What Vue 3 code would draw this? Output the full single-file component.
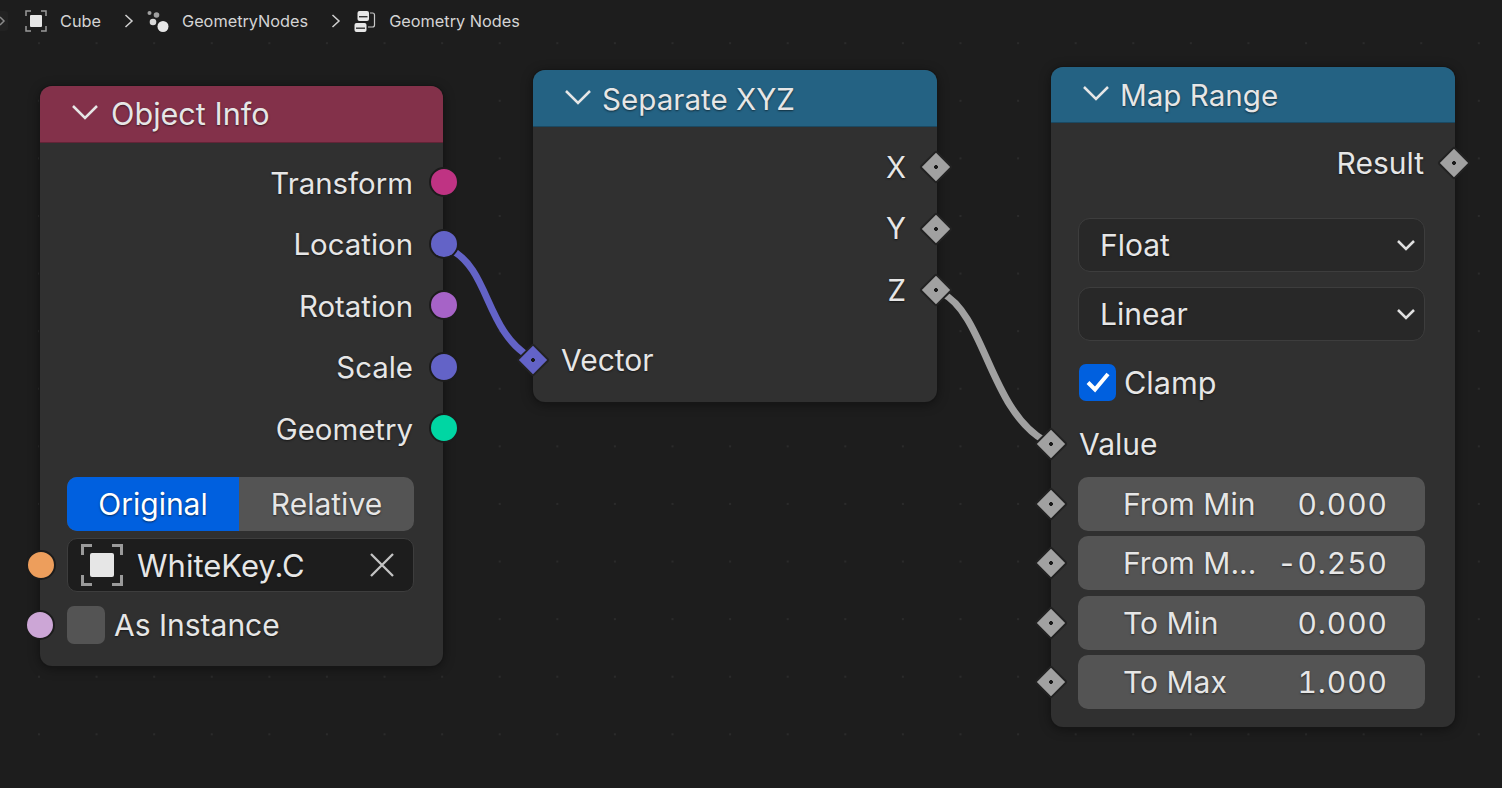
<script setup>
const objectOutputs = [
  { label: 'Transform', color: '#bf3383' },
  { label: 'Location', color: '#6363c7' },
  { label: 'Rotation', color: '#a663c7' },
  { label: 'Scale', color: '#6363c7' },
  { label: 'Geometry', color: '#00d6a3' },
]
const xyz = ['X', 'Y', 'Z']
const ranges = [
  { label: 'From Min', value: '0.000' },
  { label: 'From M...', value: '-0.250' },
  { label: 'To Min', value: '0.000' },
  { label: 'To Max', value: '1.000' },
]
</script>

<template>
  <main class="canvas">
    <nav class="crumbs">
      <span class="stub"><svg width="6" height="10" viewBox="0 0 6 10"><path d="M0 1l4 4-4 4" fill="none" stroke="#8a8a8a" stroke-width="1.5"/></svg></span>
      <svg class="crumb-icon first" width="22" height="22" viewBox="0 0 22 22">
        <path d="M1 6V1h5M16 1h5v5M21 16v5h-5M6 21H1v-5" fill="none" stroke="#9a9a9a" stroke-width="1.5"/>
        <rect x="5" y="5" width="12" height="12" rx="1" fill="#e6e6e6"/>
      </svg>
      <span class="crumb">Cube</span>
      <svg class="sep" width="10" height="14" viewBox="0 0 10 14"><path d="M1.5 1l6.500 6-6.500 6" fill="none" stroke="#d0d0d0" stroke-width="1.500"/></svg>
      <svg class="crumb-icon" width="22" height="22" viewBox="0 0 22 22">
        <circle cx="2.500" cy="3" r="2" fill="#a0a0a0"/>
        <circle cx="9.500" cy="5" r="2.800" fill="#a0a0a0"/>
        <circle cx="6" cy="12" r="3.300" fill="#d8d8d8"/>
        <circle cx="16" cy="16.500" r="5.500" fill="#e6e6e6"/>
      </svg>
      <span class="crumb">GeometryNodes</span>
      <svg class="sep" width="10" height="14" viewBox="0 0 10 14"><path d="M1.500 1l6.500 6-6.500 6" fill="none" stroke="#d0d0d0" stroke-width="1.500"/></svg>
      <svg class="crumb-icon" width="22" height="22" viewBox="0 0 22 22">
        <rect x="3.500" y="1" width="11.500" height="10" rx="2" fill="#e6e6e6"/>
        <rect x="5" y="6" width="8.500" height="1.400" fill="#333"/>
        <rect x="0.500" y="13" width="12" height="9" rx="2" fill="#e6e6e6"/>
        <rect x="2" y="17.500" width="9" height="1.400" fill="#333"/>
        <path d="M16 3h2.500q2 0 2 2v10q0 2-2 2H14" fill="none" stroke="#c8c8c8" stroke-width="1.200"/>
      </svg>
      <span class="crumb">Geometry Nodes</span>
    </nav>

    <section class="node object-info">
      <header class="head red">
        <svg class="fold" width="28" height="16" viewBox="0 0 28 16"><path d="M2 2l12 12L26 2" fill="none" stroke="currentColor" stroke-width="2.500"/></svg>
        <span>Object Info</span>
      </header>
      <div class="body">
        <div class="rows">
          <div v-for="o in objectOutputs" :key="o.label" class="row out">
            {{ o.label }}
            <i class="socket round right" :style="{ background: o.color }"></i>
          </div>
        </div>
        <div class="controls first-controls">
          <div class="segmented">
            <span class="seg on">Original</span>
            <span class="seg">Relative</span>
          </div>
          <div class="field slot">
            <i class="socket round left outer" style="background: #ed9e5c"></i>
            <svg width="42" height="42" viewBox="0 0 42 42">
              <path d="M1.500 11V1.500H11M31 1.500h9.500V11M40.500 31v9.500H31M11 40.500H1.500V31" fill="none" stroke="#9a9a9a" stroke-width="3"/>
              <rect x="9" y="9" width="24" height="24" rx="2" fill="#e6e6e6"/>
            </svg>
            <span class="slot-name">WhiteKey.C</span>
            <svg width="24" height="24" viewBox="0 0 24 24"><path d="M1 1l22 22M23 1L1 23" stroke="#c4c4c4" stroke-width="2.300"/></svg>
          </div>
          <label class="check">
            <i class="socket round left outer" style="background: #cca6d6"></i>
            <span class="box"></span>
            As Instance
          </label>
        </div>
      </div>
    </section>

    <section class="node separate">
      <header class="head blue">
        <svg class="fold" width="28" height="16" viewBox="0 0 28 16"><path d="M2 2l12 12L26 2" fill="none" stroke="currentColor" stroke-width="2.500"/></svg>
        <span>Separate XYZ</span>
      </header>
      <div class="body">
        <div class="rows">
          <div v-for="a in xyz" :key="a" class="row out">
            {{ a }}
            <i class="socket diamond right"></i>
          </div>
        </div>
        <div class="row in vector">
          <i class="socket diamond left purple"></i>
          Vector
        </div>
      </div>
    </section>

    <section class="node map-range">
      <header class="head blue">
        <svg class="fold" width="28" height="16" viewBox="0 0 28 16"><path d="M2 2l12 12L26 2" fill="none" stroke="currentColor" stroke-width="2.500"/></svg>
        <span>Map Range</span>
      </header>
      <div class="body">
        <div class="row out">
          Result
          <i class="socket diamond right"></i>
        </div>
        <div class="controls map-controls">
          <div class="select">Float
            <svg width="20" height="12" viewBox="0 0 20 12"><path d="M2 2l8 8 8-8" fill="none" stroke="#e0e0e0" stroke-width="2.500"/></svg>
          </div>
          <div class="select">Linear
            <svg width="20" height="12" viewBox="0 0 20 12"><path d="M2 2l8 8 8-8" fill="none" stroke="#e0e0e0" stroke-width="2.500"/></svg>
          </div>
          <label class="check clamp">
            <span class="box checked">
              <svg width="26" height="22" viewBox="0 0 26 22"><path d="M3 11.500l7 7L23 3" fill="none" stroke="#fff" stroke-width="4"/></svg>
            </span>
            Clamp
          </label>
        </div>
        <div class="row in value">
          <i class="socket diamond left"></i>
          Value
        </div>
        <div class="controls numbers">
          <div v-for="r in ranges" :key="r.label" class="number">
            <i class="socket diamond left outer-num"></i>
            <span>{{ r.label }}</span>
            <span class="num">{{ r.value }}</span>
          </div>
        </div>
      </div>
    </section>

    <svg class="links" width="1502" height="788" viewBox="0 0 1502 788">
      <path d="M450 249C490 270 485 330 530 357" fill="none" stroke="#6363c7" stroke-width="7"/>
      <path d="M942 293C985 315 990 410 1045 441" fill="none" stroke="#a1a1a1" stroke-width="7"/>
    </svg>
  </main>
</template>

<style scoped>
.canvas {
  position: relative;
  width: 1502px;
  height: 788px;
  overflow: hidden;
  background-color: #1d1d1d;
  background-image: radial-gradient(circle at center, #2b2b2b 0.9px, transparent 1.4px);
  background-size: 57.6px 57.6px;
  background-position: 10.2px 14.4px;
  font-family: Inter, "Noto Sans", sans-serif;
  color: #e6e6e6;
}
.crumbs {
  position: absolute;
  top: 9px;
  left: 0;
  height: 24px;
  display: flex;
  align-items: center;
  font-size: 16.3px;
  color: #d4d4d4;
}
.stub {
  width: 8px;
  height: 20px;
  margin-right: 17px;
  background: #222;
  border-radius: 0 3px 3px 0;
  display: flex;
  align-items: center;
}
.crumb-icon { flex: none; margin-right: 13px; }
.sep { flex: none; margin: 0 13px 0 23px; }
.node {
  position: absolute;
  width: 404px;
  background: #303030;
  border-radius: 12px;
  box-shadow: 0 0 0 1px #161616, 0 2px 12px rgba(0, 0, 0, 0.45);
  font-size: 30px;
  text-shadow: 0 1px 2px rgba(0, 0, 0, 0.55);
}
.object-info { left: 40px; top: 86px; height: 580px; width: 403px; }
.separate { left: 533px; top: 70px; height: 332px; }
.map-range { left: 1051px; top: 67px; height: 660px; }
.head {
  height: 56px;
  display: flex;
  align-items: center;
  gap: 10px;
  padding-left: 31px;
  border-radius: 12px 12px 0 0;
  border-bottom: 1px solid rgba(0, 0, 0, 0.25);
  box-sizing: border-box;
  font-size: 29.6px;
}
.separate .head, .object-info .head { height: 57px; }
.separate .head span { margin-top: 1px; }
.object-info .head { font-size: 30.6px; gap: 12px; padding-bottom: 1px; }
.fold { margin-top: -3px; color: #e6e6e6; }
.red { background: #83314a; }
.blue { background: #246283; }
.body { padding-top: 21px; }
.rows {
  display: flex;
  flex-direction: column;
  gap: 23.5px;
}
.row {
  position: relative;
  height: 38px;
  display: flex;
  align-items: center;
  box-sizing: border-box;
}
.out { justify-content: flex-end; padding-right: 30px; font-size: 29.4px; }
.separate .out { padding-right: 31px; }
.map-range .out { padding-right: 31px; font-size: 30px; }
.in { padding-left: 28px; }
.vector { margin-top: 31.7px; }
.value { margin-top: 25px; }
.socket {
  position: absolute;
  top: 50%;
  display: block;
  box-sizing: border-box;
  z-index: 3;
}
.round {
  width: 30px;
  height: 30px;
  margin-top: -15px;
  border-radius: 50%;
  border: 2px solid #1c1c1c;
}
.diamond {
  width: 24px;
  height: 24px;
  margin-top: -12px;
  background: #a1a1a1;
  background-image: radial-gradient(circle at center, #1a1a1a 1.700px, transparent 2.200px);
  border: 2px solid #222;
  border-radius: 2px;
  transform: rotate(45deg);
}
.purple { background-color: #6363c7; }
.round.right { right: -15.5px; margin-top: -16px; }
.diamond.right { right: -11px; }
.round.left { left: -15px; }
.diamond.left { left: -12px; }
.round.outer { left: -42px; }
.diamond.outer-num { left: -39px; }
.controls {
  display: flex;
  flex-direction: column;
  padding: 0 29px 0 27px;
}
.first-controls { margin-top: 29px; }
.segmented {
  display: flex;
  height: 54px;
  border-radius: 10px;
  overflow: hidden;
  background: #545454;
}
.seg {
  flex: 1;
  display: flex;
  align-items: center;
  justify-content: center;
}
.seg.on {
  background: #0060df;
  color: #fff;
  flex: none;
  width: 172px;
}
.field {
  position: relative;
  margin-top: 7px;
  height: 54px;
  box-sizing: border-box;
  display: flex;
  align-items: center;
  padding: 0 19px 0 13px;
  background: #1d1d1d;
  border: 1px solid #3d3d3d;
  border-radius: 10px;
}
.slot-name { flex: 1; margin-left: 14px; font-size: 31px; }
.check {
  position: relative;
  display: flex;
  align-items: center;
  gap: 9px;
  height: 37px;
  margin-top: 14px;
}
.box {
  width: 38px;
  height: 38px;
  border-radius: 7px;
  background: #545454;
  display: flex;
  align-items: center;
  justify-content: center;
}
.box.checked { background: #0060df; width: 37px; height: 37px; }
.map-controls { margin-top: 36px; padding-right: 30px; gap: 15px; }
.select {
  height: 54px;
  box-sizing: border-box;
  display: flex;
  align-items: center;
  justify-content: space-between;
  padding: 0 8px 0 21px;
  background: #282828;
  border: 1px solid #3d3d3d;
  border-radius: 12px;
}
.clamp { margin-top: 8px; height: 36px; margin-left: 1px; gap: 8px; font-size: 30.6px; }
.numbers { margin-top: 14px; padding-right: 30px; gap: 5.4px; }
.number {
  position: relative;
  height: 54px;
  display: flex;
  align-items: center;
  justify-content: space-between;
  padding: 0 38px 0 45px;
  background: #545454;
  border-radius: 10px;
  box-sizing: border-box;
}
.num { font-variant-numeric: tabular-nums; letter-spacing: 0.900px; margin-right: -0.900px; }
.links {
  position: absolute;
  left: 0;
  top: 0;
  pointer-events: none;
}
</style>
